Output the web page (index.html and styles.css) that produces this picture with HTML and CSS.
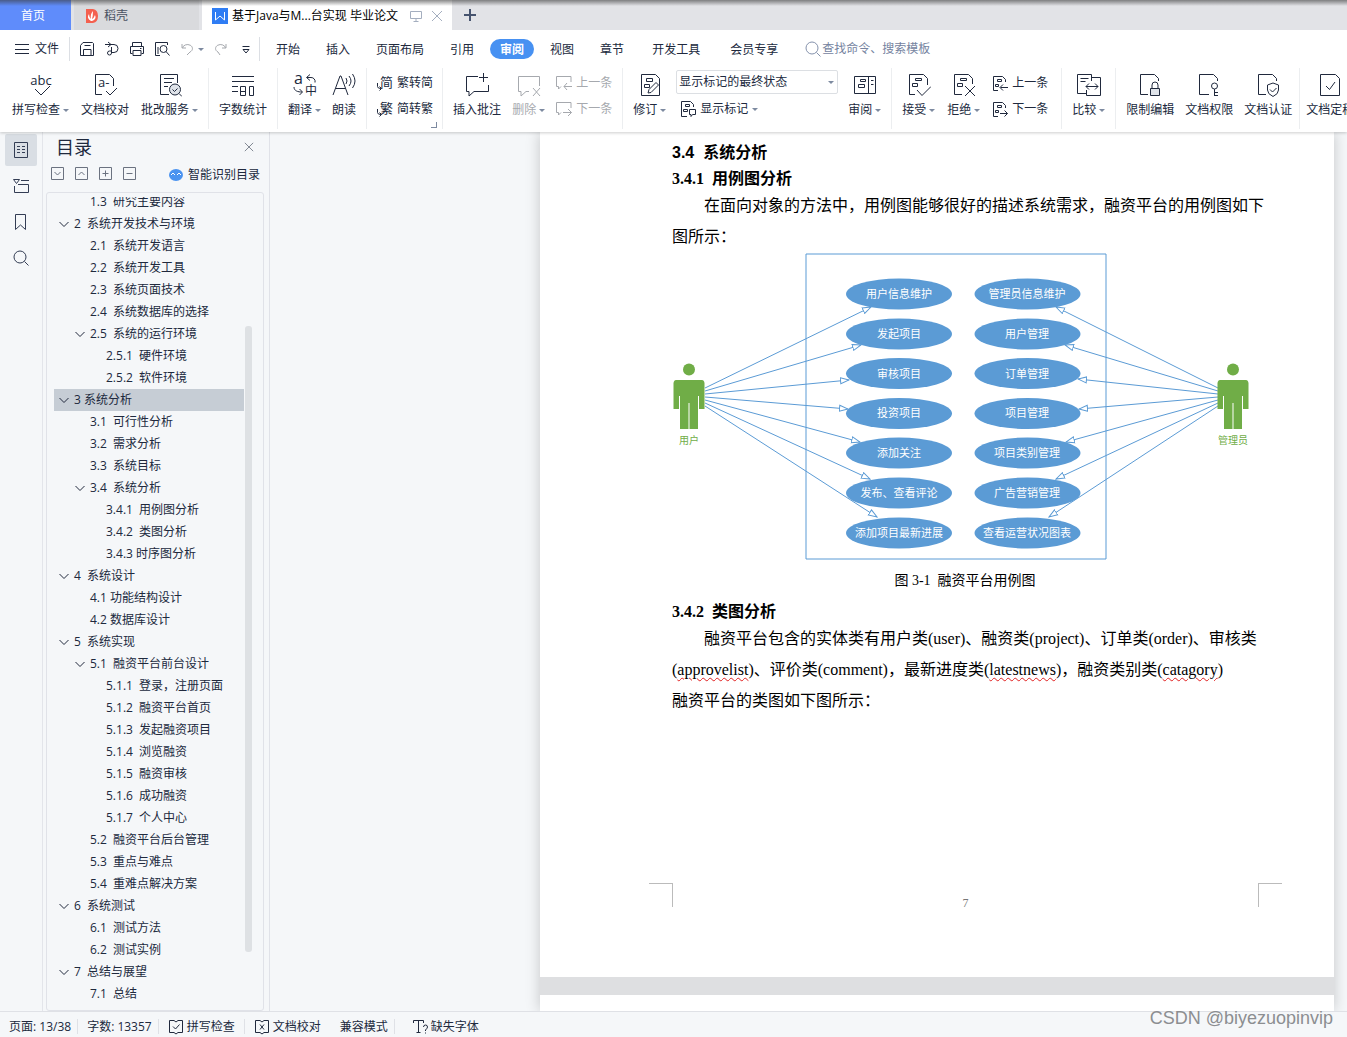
FILE: index.html
```html
<!DOCTYPE html>
<html lang="zh-CN">
<head>
<meta charset="utf-8">
<meta name="viewport" content="width=device-width, initial-scale=1">
<title>基于Java与M...台实现 毕业论文</title>
<link rel="stylesheet" href="styles.css">
</head>
<body>
<svg class="sprite" aria-hidden="true">
  <symbol id="i-burger" viewBox="0 0 16 16"><path d="M1 3.500h14M1 8.500h14M1 12.500h14"/></symbol>
  <symbol id="i-save" viewBox="0 0 16 16"><path d="M1.500 4.500 4 1.500h9.500l1 1v12h-13zM4.500 14.500V8.500h7.500v6M5.500 4.500h6"/></symbol>
  <symbol id="i-pdf" viewBox="0 0 16 16"><path d="M4 1l3 2.500L4 6M1 3.500h9a4 4 0 0 1 0 8H7.500M7.500 6v6a2 2 0 1 1-2-2h2"/></symbol>
  <symbol id="i-print" viewBox="0 0 16 16"><path d="M3.500 5V1.500h9V5M3.500 12.500h-2v-7h13v7h-2M4 9.500h8v5H4zM11 7.500h1.500"/></symbol>
  <symbol id="i-preview" viewBox="0 0 16 16"><path d="M6 14.500H1.500v-13h12V4M4 13V6"/><circle cx="9.500" cy="8" r="3.500"/><path d="M12 10.500l3.500 4"/></symbol>
  <symbol id="i-undo" viewBox="0 0 16 16"><path d="M3 3v4h4M3.500 7a5 4 0 1 1 7.500 4L8 14"/></symbol>
  <symbol id="i-redo" viewBox="0 0 16 16"><path d="M13 3v4H9M12.500 7A5 4 0 1 0 5 11l2 3"/></symbol>
  <symbol id="i-more" viewBox="0 0 16 16"><path d="M4.500 5.500h7M5 8.500l3 3.500 3-3.500z"/></symbol>
  <symbol id="i-search" viewBox="0 0 16 16"><circle cx="7" cy="7" r="6"/><path d="M11.500 11.500l4 4"/></symbol>
  <symbol id="i-x" viewBox="0 0 12 12"><path d="M1 1l10 10M11 1L1 11"/></symbol>
  <symbol id="i-screen" viewBox="0 0 12 12"><path d="M.5 1.500h11v7H.5zM6 8.500v3M3.500 11.500h5"/></symbol>

  <symbol id="i-spell" viewBox="0 0 24 24"><path d="M6 16l6 6 9-9"/><text x="12" y="12" text-anchor="middle" class="glyph">abc</text></symbol>
  <symbol id="i-proof" viewBox="0 0 24 24"><path d="M9 21.500H2.500v-20h14l4 4V13M13 18l4 4 7-7"/><text x="5" y="14" class="glyph">a-</text></symbol>
  <symbol id="i-service" viewBox="0 0 24 24"><path d="M11 21.500H2.500v-20h17V10M6 5.500h10M6 9.500h8M6 13.500h4"/><circle cx="17" cy="16.500" r="5.500" class="soft"/><path d="M14.500 16.500l2 2 3-3M21 20.500l3 3"/></symbol>
  <symbol id="i-count" viewBox="0 0 24 24"><path d="M1 3.500h22M1 8.500h22M1 13.500h6M1 18.500h6M9.500 13.500h5v9h-5zM9.500 18.500h5M18.500 13.500h4v9h-4z"/></symbol>
  <symbol id="i-trans" viewBox="0 0 24 24"><text x="1" y="11" class="glyph large">a</text><text x="12" y="22" class="glyph cjk">中</text><path d="M14 4.500h4a4 4 0 0 1 4 5M17 1.500l-3.500 3 3.500 3M1 14c0 4 4 5 8 5M6.500 16l3 3-3 3"/></symbol>
  <symbol id="i-read" viewBox="0 0 24 24"><path d="M1 22L8 3h1l7 19M3.500 15.500h10M14 5q2 3 0 6M17 3q4 5 0 10M20.500 1q5 7 0 14"/></symbol>
  <symbol id="i-tosimp" viewBox="0 0 16 16"><text x="3" y="12" class="glyph">简</text><path d="M.5 8v3.500q0 2 3.500 2M2.500 11.500l2 2-2 2"/></symbol>
  <symbol id="i-totrad" viewBox="0 0 16 16"><text x="3" y="12" class="glyph">繁</text><path d="M.5 8v3.500q0 2 3.500 2M2.500 11.500l2 2-2 2"/></symbol>
  <symbol id="i-comment" viewBox="0 0 24 24"><path d="M13 3.500H1.500v15H4v4.500l5-4.500h14.500V12M18.500 0v9M14 4.500h9"/></symbol>
  <symbol id="i-uncomment" viewBox="0 0 24 24"><path d="M12 18.500H9L4 23v-4.500H1.500v-15h21V13M16 15l7 8M23 15l-7 8"/></symbol>
  <symbol id="i-cprev" viewBox="0 0 16 16"><path d="M15 7V1.500H.5v10h2V14L5 11.500M16 11.500H8M11 8l-3 3.500 3 3.500"/></symbol>
  <symbol id="i-cnext" viewBox="0 0 16 16"><path d="M15 7V1.500H.5v10h2V14L5 11.500M7 11.500h8.500M12 8l3.500 3.500L12 15"/></symbol>
  <symbol id="i-track" viewBox="0 0 24 24"><path d="M3.500 1.500h14l4 4v17h-18zM8.500 5.500h6v3h-6zM6.500 11.500h5v3h-5zM10 20l1-3.500 7-7 2.500 2.500-7.500 7.500z"/></symbol>
  <symbol id="i-markup" viewBox="0 0 16 16"><path d="M7 15.500H1.500v-15h9l3 3V6M5.500 3.500h4v2h-4zM3.500 8.500h4v2h-4zM9.500 8.500h6v5h-3l-1.500 2v-2H9.500z"/></symbol>
  <symbol id="i-pane" viewBox="0 0 24 24"><path d="M1.500 3.500h21v17h-21zM15.500 3.500v17M7.500 6.500h5v2h-5zM5.500 11.500h6v3h-6zM18 7.500h2.500M18 11.500h2.500"/></symbol>
  <symbol id="i-accept" viewBox="0 0 24 24"><path d="M8 21.500H2.500v-20h14l4 4V12M8.500 5.500h6v2h-6zM5.500 10.500h5v3h-5zM10 17l5 5.500 9-9"/></symbol>
  <symbol id="i-reject" viewBox="0 0 24 24"><path d="M10 21.500H2.500v-20h14l4 4V11M8.500 5.500h6v2h-6zM5.500 10.500h5v3h-5zM13 13l10 10M23 13L13 23"/></symbol>
  <symbol id="i-rprev" viewBox="0 0 16 16"><path d="M6 15.500H1.500v-14h9l3 3V7M5.500 4.500h4v2h-4zM3.500 9.500h3v2h-3zM16 12.500H8.500M11 9.500l-3 3 3 3"/></symbol>
  <symbol id="i-rnext" viewBox="0 0 16 16"><path d="M6 15.500H1.500v-14h9l3 3V7M5.500 4.500h4v2h-4zM3.500 9.500h3v2h-3zM8 12.500h7.500M12.500 9.500l3 3-3 3"/></symbol>
  <symbol id="i-compare" viewBox="0 0 24 24"><path d="M9 20.500H.5v-19h14V8M3.500 5.500h8M3.500 8.500h5M15 4.500h8.500v18H9.500V17M9 13.500h12M12 10.500l-3 3 3 3M18 10.500l3 3-3 3"/></symbol>
  <symbol id="i-lock" viewBox="0 0 24 24"><path d="M10 21.500H2.500v-20h14l4 4V8M14 15v-3a2.500 2.500 0 0 1 6 0v3"/><path class="soft" d="M12.500 15.500h9v7h-9z"/></symbol>
  <symbol id="i-key" viewBox="0 0 24 24"><path d="M12 21.500H2.500v-20h14l4 4V8"/><circle cx="17.500" cy="13" r="3"/><path d="M17.500 16v7M18 19.500h3M18 22.500h3"/></symbol>
  <symbol id="i-shield" viewBox="0 0 24 24"><path d="M10 21.500H2.500v-20h14l4 4V8M17 10l5.500 2v5q0 4-5.500 6.500-5.500-2.500-5.500-6.500v-5zM14 16.500l2.500 2.500 4-4"/></symbol>
  <symbol id="i-final" viewBox="0 0 24 24"><path d="M2.500 1.500h15l4 4v17h-19zM8 13l3.500 3.500L17 9"/></symbol>

  <symbol id="i-outline" viewBox="0 0 16 16"><path d="M1.500.5h13v15h-13zM4 4.500h3M9 4.500h3M4 7.500h3M9 7.500h3M4 10.500h3M9 10.500h3"/></symbol>
  <symbol id="i-chapter" viewBox="0 0 16 16"><path d="M.5 1.500h6l-3 4zM8 2.500h8M1.500 8v6.500h14v-8H5"/></symbol>
  <symbol id="i-bookmark" viewBox="0 0 16 16"><path d="M2.500.5h10v15l-5-4.500-5 4.500z"/></symbol>
  <symbol id="i-down" viewBox="0 0 14 14"><path d="M.5.5h12v12H.5zM3.500 5l3 3 3-3"/></symbol>
  <symbol id="i-up" viewBox="0 0 14 14"><path d="M.5.5h12v12H.5zM3.500 8l3-3 3 3"/></symbol>
  <symbol id="i-plus" viewBox="0 0 14 14"><path d="M.5.5h12v12H.5zM3.500 6.500h6M6.500 3.500v6"/></symbol>
  <symbol id="i-minus" viewBox="0 0 14 14"><path d="M.5.5h12v12H.5zM3.500 6.500h6"/></symbol>
  <symbol id="i-chev" viewBox="0 0 10 10"><path d="M.5 3L5 7.500 9.500 3"/></symbol>
  <symbol id="i-bookok" viewBox="0 0 16 16"><path d="M6 13.500H1.500v-12H6L8 3l2-1.500h4.500v12H10L8 15zM5 7.500L7.500 10l4-4.500"/></symbol>
  <symbol id="i-bookx" viewBox="0 0 16 16"><path d="M6 13.500H1.500v-12H6L8 3l2-1.500h4.500v12H10L8 15zM6 5.500l4 5M10 5.500l-4 5"/></symbol>
  <symbol id="i-font" viewBox="0 0 16 16"><path d="M.5 4V1.500h10V4M5.500 1.500v12M3.500 13.500h4M10.500 8q0-2 2-2t2 2q0 1-2 3v1M12.500 13.500v1"/></symbol>
</svg>

<header class="top">
  <nav class="tabs" aria-label="文档标签">
    <button class="tab tab-home">首页</button>
    <button class="tab tab-docer">
      <svg class="logo" viewBox="0 0 14 14" aria-hidden="true"><path d="M1 0h7q5 1 5 7t-5 7H1z" fill="#f4604f"/><path d="M6 12Q1 9 4 5q0 3 2 5Q5 5 8 2q0 5-1 8 2-1 3-4 2 4-3 6z" fill="#fff"/></svg>
      稻壳
    </button>
    <div class="tab tab-doc">
      <svg class="logo wide" viewBox="0 0 16 16" aria-hidden="true"><path d="M0 0h16v16H0z" fill="#2f7df4"/><path d="M3.500 4v8l4.500-4 4.500 4V4" fill="none" stroke="#fff"/></svg>
      <span class="doc-name">基于Java与M...台实现 毕业论文</span>
      <button class="tab-tool" aria-label="演示"><svg class="i s12"><use href="#i-screen"/></svg></button>
      <button class="tab-tool" aria-label="关闭"><svg class="i s12"><use href="#i-x"/></svg></button>
    </div>
    <button class="tab-new" aria-label="新建"><svg class="i s12" viewBox="0 0 12 12"><path d="M6 0v12M0 6h12"/></svg></button>
  </nav>

  <div class="menubar">
    <button class="file"><svg class="i s16"><use href="#i-burger"/></svg>文件</button>
    <div class="quick">
      <button aria-label="保存"><svg class="i s16"><use href="#i-save"/></svg></button>
      <button aria-label="输出为PDF"><svg class="i s16"><use href="#i-pdf"/></svg></button>
      <button aria-label="打印"><svg class="i s16"><use href="#i-print"/></svg></button>
      <button aria-label="打印预览"><svg class="i s16"><use href="#i-preview"/></svg></button>
      <button class="off" aria-label="撤销"><svg class="i s16"><use href="#i-undo"/></svg><span class="caret"></span></button>
      <button class="off" aria-label="恢复"><svg class="i s16"><use href="#i-redo"/></svg></button>
      <button aria-label="更多"><svg class="i s16"><use href="#i-more"/></svg></button>
    </div>
    <nav class="menus" aria-label="功能区">
      <button>开始</button><button>插入</button><button>页面布局</button><button>引用</button><button class="current">审阅</button><button>视图</button><button>章节</button><button class="roomy">开发工具</button><button class="roomy">会员专享</button>
    </nav>
    <label class="find"><svg class="i s16"><use href="#i-search"/></svg><input type="search" placeholder="查找命令、搜索模板" aria-label="查找命令、搜索模板"></label>
  </div>

  <div class="ribbon">
    <div class="group first">
      <button class="big"><svg class="i s24"><use href="#i-spell"/></svg><span>拼写检查<i class="caret"></i></span></button>
      <button class="big"><svg class="i s24"><use href="#i-proof"/></svg><span>文档校对</span></button>
      <button class="big"><svg class="i s24"><use href="#i-service"/></svg><span>批改服务<i class="caret"></i></span></button>
    </div>
    <div class="group"><button class="big"><svg class="i s24"><use href="#i-count"/></svg><span>字数统计</span></button></div>
    <div class="group">
      <button class="big"><svg class="i s24"><use href="#i-trans"/></svg><span>翻译<i class="caret"></i></span></button>
      <button class="big"><svg class="i s24"><use href="#i-read"/></svg><span>朗读</span></button>
    </div>
    <div class="group narrow corner">
      <div class="stack">
        <button><svg class="i s16"><use href="#i-tosimp"/></svg>繁转简</button>
        <button><svg class="i s16"><use href="#i-totrad"/></svg>简转繁</button>
      </div>
    </div>
    <div class="group">
      <button class="big"><svg class="i s24"><use href="#i-comment"/></svg><span>插入批注</span></button>
      <button class="big off"><svg class="i s24"><use href="#i-uncomment"/></svg><span>删除<i class="caret"></i></span></button>
      <div class="stack">
        <button class="off"><svg class="i s16"><use href="#i-cprev"/></svg>上一条</button>
        <button class="off"><svg class="i s16"><use href="#i-cnext"/></svg>下一条</button>
      </div>
    </div>
    <div class="group tracking">
      <button class="big"><svg class="i s24"><use href="#i-track"/></svg><span>修订<i class="caret"></i></span></button>
      <div class="stack">
        <span class="picker"><select aria-label="显示标记"><option>显示标记的最终状态</option><option>最终状态</option><option>原始状态</option></select></span>
        <button class="inset"><svg class="i s16"><use href="#i-markup"/></svg>显示标记<i class="caret"></i></button>
      </div>
      <button class="big"><svg class="i s24"><use href="#i-pane"/></svg><span>审阅<i class="caret"></i></span></button>
    </div>
    <div class="group changes">
      <button class="big"><svg class="i s24"><use href="#i-accept"/></svg><span>接受<i class="caret"></i></span></button>
      <button class="big"><svg class="i s24"><use href="#i-reject"/></svg><span>拒绝<i class="caret"></i></span></button>
      <div class="stack">
        <button><svg class="i s16"><use href="#i-rprev"/></svg>上一条</button>
        <button><svg class="i s16"><use href="#i-rnext"/></svg>下一条</button>
      </div>
    </div>
    <div class="group"><button class="big"><svg class="i s24"><use href="#i-compare"/></svg><span>比较<i class="caret"></i></span></button></div>
    <div class="group tight">
      <button class="big"><svg class="i s24"><use href="#i-lock"/></svg><span>限制编辑</span></button>
      <button class="big"><svg class="i s24"><use href="#i-key"/></svg><span>文档权限</span></button>
      <button class="big"><svg class="i s24"><use href="#i-shield"/></svg><span>文档认证</span></button>
    </div>
    <div class="group tight"><button class="big"><svg class="i s24"><use href="#i-final"/></svg><span>文档定稿</span></button></div>
  </div>
</header>

<main class="work">
  <nav class="rail" aria-label="侧栏">
    <button class="on" aria-label="目录"><svg class="i s16"><use href="#i-outline"/></svg></button>
    <button aria-label="章节"><svg class="i s16"><use href="#i-chapter"/></svg></button>
    <button aria-label="书签"><svg class="i s16"><use href="#i-bookmark"/></svg></button>
    <button aria-label="查找"><svg class="i s16"><use href="#i-search"/></svg></button>
  </nav>

  <aside class="toc">
    <div class="toc-head"><h2>目录</h2><button aria-label="关闭目录"><svg class="i s10"><use href="#i-x"/></svg></button></div>
    <div class="toc-tools">
      <button aria-label="展开"><svg class="i s14"><use href="#i-down"/></svg></button>
      <button aria-label="收起"><svg class="i s14"><use href="#i-up"/></svg></button>
      <button aria-label="提升级别"><svg class="i s14"><use href="#i-plus"/></svg></button>
      <button aria-label="降低级别"><svg class="i s14"><use href="#i-minus"/></svg></button>
      <button class="smart"><svg class="s14" viewBox="0 0 14 14" aria-hidden="true"><ellipse cx="7" cy="7" rx="7" ry="6" fill="#4a93f0"/><path d="M2 7l2-2 2 2M8 7l2-2 2 2" fill="none" stroke="#fff"/></svg>智能识别目录</button>
    </div>
    <div class="toc-box">
      <ul class="tree">
        <li class="l2"><a href="#s">1.3  研究主要内容</a></li>
        <li class="l1"><svg class="i s10"><use href="#i-chev"/></svg><a href="#s">2  系统开发技术与环境</a></li>
        <li class="l2"><a href="#s">2.1  系统开发语言</a></li>
        <li class="l2"><a href="#s">2.2  系统开发工具</a></li>
        <li class="l2"><a href="#s">2.3  系统页面技术</a></li>
        <li class="l2"><a href="#s">2.4  系统数据库的选择</a></li>
        <li class="l2"><svg class="i s10"><use href="#i-chev"/></svg><a href="#s">2.5  系统的运行环境</a></li>
        <li class="l3"><a href="#s">2.5.1  硬件环境</a></li>
        <li class="l3"><a href="#s">2.5.2  软件环境</a></li>
        <li class="l1 here"><svg class="i s10"><use href="#i-chev"/></svg><a href="#s">3 系统分析</a></li>
        <li class="l2"><a href="#s">3.1  可行性分析</a></li>
        <li class="l2"><a href="#s">3.2  需求分析</a></li>
        <li class="l2"><a href="#s">3.3  系统目标</a></li>
        <li class="l2"><svg class="i s10"><use href="#i-chev"/></svg><a href="#s">3.4  系统分析</a></li>
        <li class="l3"><a href="#s">3.4.1  用例图分析</a></li>
        <li class="l3"><a href="#s">3.4.2  类图分析</a></li>
        <li class="l3"><a href="#s">3.4.3 时序图分析</a></li>
        <li class="l1"><svg class="i s10"><use href="#i-chev"/></svg><a href="#s">4  系统设计</a></li>
        <li class="l2"><a href="#s">4.1 功能结构设计</a></li>
        <li class="l2"><a href="#s">4.2 数据库设计</a></li>
        <li class="l1"><svg class="i s10"><use href="#i-chev"/></svg><a href="#s">5  系统实现</a></li>
        <li class="l2"><svg class="i s10"><use href="#i-chev"/></svg><a href="#s">5.1  融资平台前台设计</a></li>
        <li class="l3"><a href="#s">5.1.1  登录，注册页面</a></li>
        <li class="l3"><a href="#s">5.1.2  融资平台首页</a></li>
        <li class="l3"><a href="#s">5.1.3  发起融资项目</a></li>
        <li class="l3"><a href="#s">5.1.4  浏览融资</a></li>
        <li class="l3"><a href="#s">5.1.5  融资审核</a></li>
        <li class="l3"><a href="#s">5.1.6  成功融资</a></li>
        <li class="l3"><a href="#s">5.1.7  个人中心</a></li>
        <li class="l2"><a href="#s">5.2  融资平台后台管理</a></li>
        <li class="l2"><a href="#s">5.3  重点与难点</a></li>
        <li class="l2"><a href="#s">5.4  重难点解决方案</a></li>
        <li class="l1"><svg class="i s10"><use href="#i-chev"/></svg><a href="#s">6  系统测试</a></li>
        <li class="l2"><a href="#s">6.1  测试方法</a></li>
        <li class="l2"><a href="#s">6.2  测试实例</a></li>
        <li class="l1"><svg class="i s10"><use href="#i-chev"/></svg><a href="#s">7  总结与展望</a></li>
        <li class="l2"><a href="#s">7.1  总结</a></li>
      </ul>
      <div class="track"><div class="thumb"></div></div>
    </div>
  </aside>

  <section class="canvas">
    <div class="sheets">
    <article class="sheet" id="s">
      <h3 class="sans">3.4  系统分析</h3>
      <h4>3.4.1  用例图分析</h4>
      <p><span class="indent"></span>在面向对象的方法中，用例图能够很好的描述系统需求，融资平台的用例图如下<br>图所示：</p>
      <figure>
        <svg class="usecase" viewBox="0 0 586 310" role="img" aria-label="融资平台用例图">
          <defs>
            <marker id="tip" viewBox="0 0 10 8" markerWidth="10" markerHeight="8" refX="9" refY="4" orient="auto" markerUnits="userSpaceOnUse"><path d="M.5 1L9 4 .5 7z" fill="#fff" stroke="#5b9bd5"/></marker>
            <g id="person"><circle cx="17" cy="116.500" r="6"/><path d="M4 127h26q2 0 2.500 3v26h-5.500v-13h-1v33h-8.500v-26h-1v26H8v-33H7v13H1.500v-26q.5-3 2.500-3z"/></g>
          </defs>
          <path class="frame" d="M134 1h300v305H134z"/>
          <g class="links">
            <path d="M33 135L199 54"/><path d="M33 138L189 92"/><path d="M33 141L177 127"/><path d="M33 144L176 156"/><path d="M33 147L188 189"/><path d="M33 150L198 226"/><path d="M33 153L205 264"/>
            <path d="M546 135L384 54"/><path d="M546 138L393 92"/><path d="M546 141L406 126"/><path d="M546 144L407 156"/><path d="M546 147L394 189"/><path d="M546 150L384 226"/><path d="M546 153L377 264"/>
          </g>
          <g class="ovals">
            <ellipse cx="227" cy="41" rx="53" ry="15.500"/><ellipse cx="227" cy="81" rx="53" ry="15.500"/><ellipse cx="227" cy="120.500" rx="53" ry="15.500"/><ellipse cx="227" cy="160.500" rx="53" ry="15.500"/><ellipse cx="227" cy="200" rx="53" ry="15.500"/><ellipse cx="227" cy="240" rx="53" ry="15.500"/><ellipse cx="227" cy="280" rx="53" ry="15.500"/>
            <ellipse cx="355.500" cy="41" rx="53" ry="15.500"/><ellipse cx="355.500" cy="81" rx="53" ry="15.500"/><ellipse cx="355.500" cy="120.500" rx="53" ry="15.500"/><ellipse cx="355.500" cy="160.500" rx="53" ry="15.500"/><ellipse cx="355.500" cy="200" rx="53" ry="15.500"/><ellipse cx="355.500" cy="240" rx="53" ry="15.500"/><ellipse cx="355.500" cy="280" rx="53" ry="15.500"/>
          </g>
          <g class="cases">
            <text x="227" y="45">用户信息维护</text><text x="227" y="85">发起项目</text><text x="227" y="125">审核项目</text><text x="227" y="164">投资项目</text><text x="227" y="204">添加关注</text><text x="227" y="244">发布、查看评论</text><text x="227" y="284">添加项目最新进展</text>
            <text x="355" y="45">管理员信息维护</text><text x="355" y="85">用户管理</text><text x="355" y="125">订单管理</text><text x="355" y="164">项目管理</text><text x="355" y="204">项目类别管理</text><text x="355" y="244">广告营销管理</text><text x="355" y="284">查看运营状况图表</text>
          </g>
          <g class="actors"><use href="#person"/><use href="#person" x="544"/><text x="17" y="191">用户</text><text x="561" y="191">管理员</text></g>
        </svg>
        <figcaption>图 3-1  融资平台用例图</figcaption>
      </figure>
      <h4>3.4.2  类图分析</h4>
      <p><span class="indent"></span>融资平台包含的实体类有用户类(user)、融资类(project)、订单类(order)、审核类<br>(<span class="typo">approvelist</span>)、评价类(comment)，最新进度类(<span class="typo">latestnews</span>)，融资类别类(<span class="typo">catagory</span>)<br>融资平台的类图如下图所示：</p>
      <footer class="foot"><span class="crop left"></span><span class="folio">7</span><span class="crop right"></span></footer>
    </article>
    <article class="sheet next"></article>
    </div>
  </section>
</main>

<footer class="status">
  <span class="cell">页面: 13/38</span>
  <span class="cell">字数: 13357</span>
  <button class="cell"><svg class="i s16"><use href="#i-bookok"/></svg>拼写检查</button>
  <button class="cell bare"><svg class="i s16"><use href="#i-bookx"/></svg>文档校对</button>
  <button class="cell mode">兼容模式</button>
  <button class="cell last"><svg class="i s16"><use href="#i-font"/></svg>缺失字体</button>
</footer>
<div class="watermark">CSDN @biyezuopinvip</div>
</body>
</html>
```
FILE: styles.css
```css
* { box-sizing: border-box; }
body {
  margin: 0;
  height: 100vh;
  display: flex;
  flex-direction: column;
  overflow: hidden;
  background: #f5f7f9;
  color: #20293d;
  font: 12px/18px "Open Sans", "Noto Sans CJK SC", sans-serif;
}
button {
  display: flex;
  align-items: center;
  flex: none;
  margin: 0;
  padding: 0;
  border: 0;
  background: none;
  color: inherit;
  font: inherit;
  white-space: nowrap;
}
ul, h2, h3, h4, p, figure { margin: 0; padding: 0; }
a { color: inherit; text-decoration: none; }

/* icons */
.sprite { display: none; }
.i { flex: none; fill: none; stroke: currentColor; stroke-width: 1; overflow: visible; }
.s10 { width: 10px; height: 10px; }
.s12 { width: 12px; height: 12px; }
.s14 { width: 14px; height: 14px; }
.s16 { width: 16px; height: 16px; }
.s24 { width: 24px; height: 24px; }
.glyph { font-size: 13px; fill: currentColor; stroke: none; }
.glyph.cjk { font-size: 12px; }
.glyph.large { font-size: 16px; }
.soft { fill: #dfe3e9; }
.caret {
  display: inline-block;
  margin-left: 3px;
  border: 3px solid transparent;
  border-top-color: #7d8aa0;
  border-bottom: 0;
  vertical-align: middle;
}

/* document tabs */
.top { flex: none; background: #fff; box-shadow: 0 1px 3px rgba(0, 0, 0, .2); z-index: 1; }
.tabs {
  position: relative;
  display: flex;
  height: 30px;
  background: #e2e3e7;
}
.tabs::after {
  content: "";
  position: absolute;
  inset: 0 0 auto;
  height: 6px;
  background: linear-gradient(rgba(60, 60, 60, .6), rgba(60, 60, 60, 0));
}
.tab { height: 30px; padding-top: 2px; }
.tab-home { width: 71px; padding-right: 5px; justify-content: center; background: #5f8cfb; color: #fff; }
.tab-docer { width: 125px; margin: 0 3px; padding-left: 11px; gap: 5px; background: #d9dadd; color: #4a5262; }
.tab-doc { display: flex; align-items: center; width: 250px; padding-left: 10px; background: #fff; color: #000; }
.doc-name { flex: 1; margin-left: 4px; white-space: nowrap; }
.tab-tool { margin-right: 9px; color: #a4aebf; }
.logo { width: 14px; height: 14px; }
.logo.wide { width: 16px; height: 16px; }
.tab-new { width: 36px; justify-content: center; color: #46536e; }
.tab-new .i { stroke-width: 2; }

/* menu row */
.menubar { display: flex; align-items: center; height: 38px; }
.file { padding: 0 10px 0 14px; gap: 5px; }
.quick {
  display: flex;
  align-items: center;
  gap: 9px;
  height: 24px;
  padding: 0 5px 0 9px;
  border: solid #dcdfe4;
  border-width: 0 1px;
}
.off { color: #a6a9ae; }
.menus { display: flex; align-items: center; padding-left: 3px; }
.menus button { padding: 1px 13px 0; }
.menus .roomy { padding: 1px 15px 0; }
.menus .current {
  height: 20px;
  margin: 0 3px;
  padding: 1px 10px 0;
  border-radius: 10px;
  background: #4791f2;
  color: #fff;
  font-weight: bold;
}
.find { display: flex; align-items: center; gap: 1px; margin-left: 12px; color: #8592ac; }
.find input { width: 140px; padding: 0; border: 0; outline: 0; font: inherit; background: none; }
.find input::placeholder { color: #7583a0; opacity: 1; }

/* ribbon */
.ribbon { display: flex; height: 64px; padding-bottom: 3px; overflow: hidden; }
.group {
  position: relative;
  display: flex;
  flex: none;
  align-items: flex-start;
  gap: 11px;
  padding: 5px 10px 0;
  border-right: 1px solid #eceef0;
}
.group.first { gap: 12px; padding-left: 12px; }
.group.narrow { padding-right: 9px; }
.group.tracking { gap: 10px; }
.group.changes { gap: 12px; padding-right: 13px; }
.group.tight { padding-right: 7px; }
.group.tight + .tight { padding-left: 6px; }
.group.corner::after {
  content: "";
  position: absolute;
  right: 5px;
  bottom: 1px;
  width: 5px;
  height: 5px;
  border: solid #7d8aa0;
  border-width: 0 1px 1px 0;
}
.big { flex-direction: column; gap: 4px; }
.stack { display: flex; flex-direction: column; gap: 6px; }
.stack button { height: 20px; gap: 4px; }
.stack .caret { margin-left: 0; }
.inset { padding-left: 4px; }
.picker { position: relative; display: flex; margin-top: -3px; margin-bottom: -1px; }
.picker::after {
  content: "";
  position: absolute;
  right: 4px;
  top: 11px;
  border: 3px solid transparent;
  border-top-color: #7d8aa0;
  border-bottom: 0;
  pointer-events: none;
}
.picker select {
  appearance: none;
  width: 162px;
  height: 24px;
  padding: 0 2px;
  border: 1px solid #dcdfe3;
  border-radius: 2px;
  background: #fff;
  color: inherit;
  font: inherit;
}

/* side rail and outline pane */
.work { display: flex; flex: 1; min-height: 0; }
.rail {
  display: flex;
  flex-direction: column;
  gap: 4px;
  width: 43px;
  padding: 2px 5px;
  border-right: 1px solid #e3e5ea;
  color: #333d54;
}
.rail button { width: 32px; height: 32px; justify-content: center; border-radius: 2px; }
.rail .on { background: #d9dee4; }
.toc {
  display: flex;
  flex-direction: column;
  width: 227px;
  padding: 0 5px 0 3px;
  border-right: 1px solid #e0e2e8;
}
.toc-head { display: flex; align-items: center; justify-content: space-between; height: 30px; padding: 0 10px; }
.toc-head h2 { font-size: 18px; font-weight: normal; line-height: 28px; }
.toc-head button { color: #6b7280; }
.toc-tools { display: flex; align-items: center; gap: 10px; height: 24px; padding: 0 4px 0 5px; color: #6b7280; }
.toc-tools .smart { gap: 5px; margin-left: auto; padding-top: 1px; color: #20293d; }
.toc-box {
  display: flex;
  flex: 1;
  min-height: 0;
  margin-top: 6px;
  padding: 4px 11px 0 7px;
  border: 1px solid #e0e2e8;
  border-radius: 3px;
}
.tree { flex: 1; overflow: hidden; list-style: none; }
.tree li { display: flex; align-items: center; height: 22px; gap: 5px; white-space: pre; }
.tree li:first-child { margin-top: -6px; }
.tree .l1 { padding-left: 5px; }
.tree .l2 { padding-left: 36px; }
.tree .l3 { padding-left: 52px; }
.tree .l2:has(svg) { padding-left: 21px; }
.tree .here { background: #c6cdd5; }
.track { width: 8px; padding-top: 129px; padding-bottom: 58px; }
.thumb { width: 7px; height: 100%; margin-left: 1px; border-radius: 3px; background: #dee1e4; }

/* document */
.canvas {
  display: flex;
  flex: 1;
  justify-content: flex-end;
  min-width: 0;
  padding-right: 13px;
  overflow: hidden;
}
.sheets { width: 794px; flex: none; box-shadow: 0 0 14px rgba(0, 0, 0, .2); background: #dedfe1; }
.sheet {
  padding: 8px 76px 65px 132px;
  background: #fff;
  color: #000;
  font: 16px/31px "Liberation Serif", "Noto Sans CJK SC", serif;
  white-space: nowrap;
}
.sheet h3, .sheet h4 { font-size: 16px; line-height: 26px; white-space: pre; }
.sheet h4 { margin-bottom: -2px; }
.sheet .sans { font-family: "Liberation Sans", "Noto Sans CJK SC", sans-serif; }
.sheet.next { height: 40px; margin-top: 18px; padding: 0; }
.indent { display: inline-block; width: 32px; }
.typo { text-decoration: underline wavy #e02020 1px; text-underline-offset: 2px; }
figure { padding-top: 1px; }
.usecase { display: block; width: 100%; }
figcaption { margin: 5px 0; font-size: 14px; line-height: 26px; text-align: center; white-space: pre; }
.frame { fill: none; stroke: #5b9bd5; stroke-width: 1; }
.links { fill: none; stroke: #5b9bd5; }
.links path { marker-end: url(#tip); }
.ovals { fill: #5b9bd5; }
.cases, .actors { font: 11px "Noto Sans CJK SC", sans-serif; text-anchor: middle; }
.cases { fill: #fff; }
.actors { fill: #70ad47; font-size: 10px; }
.foot { display: flex; justify-content: space-between; margin: 167px -24px 0 -23px; }
.crop { width: 24px; height: 24px; border-top: 1px solid #bbb; }
.crop.left { border-right: 1px solid #bbb; }
.crop.right { border-left: 1px solid #bbb; }
.folio { padding-top: 11px; color: #777; font-size: 12px; line-height: 18px; }

/* status bar */
.status {
  display: flex;
  align-items: center;
  flex: none;
  height: 26px;
  padding: 4px 0 0;
  border-top: 1px solid #dfe1e6;
  background: #f5f7f9;
  z-index: 1;
}
.cell {
  display: flex;
  align-items: center;
  gap: 3px;
  height: 15px;
  padding: 0 6px 0 9px;
  border-right: 1px solid #dfe1e6;
  white-space: pre;
}
button.cell { padding: 0 9px; }
button.cell.bare { border: 0; }
button.cell.mode { padding: 0 6px 0 10px; }
button.cell.last { border: 0; padding-left: 18px; gap: 2px; }
.watermark {
  position: absolute;
  right: 14px;
  bottom: 8px;
  z-index: 2;
  color: #8c8e91;
  font: 18px/22px "Liberation Sans", sans-serif;
}
```
